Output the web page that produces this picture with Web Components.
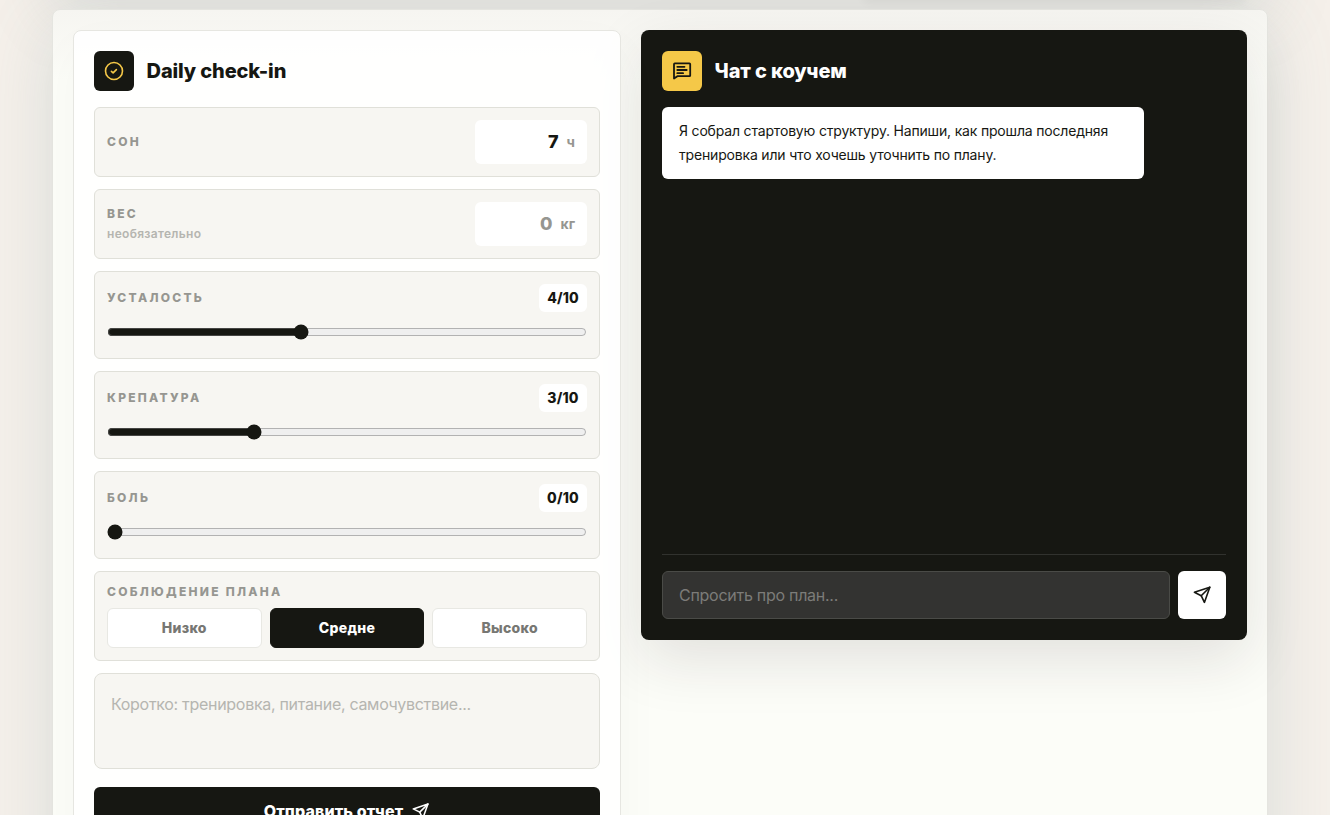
<!DOCTYPE html>
<html lang="ru">
<head>
<meta charset="utf-8">
<title>Daily check-in</title>
<style>
    html {
        height: 100%;
        overflow: hidden;
    }
    body {
        --ink: #161712;
        --line: #e0e0d9;
        --soft: #f7f6f2;
        --muted: #969691;
        --accent: #f5c848;
        height: 100%;
        margin: 0;
        overflow: hidden;
        background: #f5f0ea;
        color: var(--ink);
        font-family: Inter, "Noto Sans", sans-serif;
        font-size: 16px;
    }
</style>
</head>
<body>

<coach-page>
    <check-in-panel>
        <panel-title label="Daily check-in" icon="check"></panel-title>
        <number-row label="Сон" value="7" unit="ч"></number-row>
        <number-row label="Вес" hint="необязательно" value="0" unit="кг" empty></number-row>
        <scale-row label="Усталость" value="4"></scale-row>
        <scale-row label="Крепатура" value="3"></scale-row>
        <scale-row label="Боль" value="0"></scale-row>
        <choice-row label="Соблюдение плана" options="Низко,Средне,Высоко" selected="1"></choice-row>
        <note-field placeholder="Коротко: тренировка, питание, самочувствие..."></note-field>
        <submit-button>Отправить отчет</submit-button>
    </check-in-panel>
    <coach-chat>
        <panel-title label="Чат с коучем" icon="chat" slot="title"></panel-title>
        <chat-message>Я собрал стартовую структуру. Напиши, как прошла последняя тренировка или что хочешь уточнить по плану.</chat-message>
    </coach-chat>
</coach-page>

<script>
    const icons = {
        check: '<circle cx="10" cy="10" r="8.5"/><path d="M7.4 10.4l1.7 1.5 3.3-3.3"/>',
        chat: '<path d="M2 17.6V3.2c0-.5.3-.8.8-.8h14.6c.5 0 .8.3.8.8v11.2c0 .5-.3.8-.8.8H5.4z"/><path d="M5.3 5.8h7.2M5.3 9h9.4M5.3 12.2h5.8"/>',
        send: '<path d="M17.8 2.2L2.4 7.3l6.8 3.4 3.2 6.7z"/><path d="M9.2 10.7l8.6-8.5"/>'
    }

    function icon(name, size = 20, width = 1.6) {
        return `<svg width="${size}" height="${size}" viewBox="0 0 20 20" fill="none" stroke="currentColor" stroke-width="${width}" stroke-linecap="round" stroke-linejoin="round">${icons[name]}</svg>`
    }

    const base = `
        * { box-sizing: border-box; }
        svg { display: block; flex: none; }
        .label {
            font-size: 12px;
            line-height: 16px;
            font-weight: 800;
            letter-spacing: 0.19em;
            text-transform: uppercase;
            color: var(--muted);
        }
        .row {
            border: 1px solid var(--line);
            border-radius: 6px;
            background: var(--soft);
            padding: 12px;
        }
    `

    class BaseElement extends HTMLElement {
        constructor() {
            super()
            this.attachShadow({mode: 'open'})
        }
        connectedCallback() {
            this.shadowRoot.innerHTML = `<style>${base}</style>` + this.render()
        }
        attr(name) {
            return this.getAttribute(name) || ''
        }
    }

    customElements.define('coach-page', class extends BaseElement {
        render() {
            return `
            <style>
                :host { display: block; height: 100%; }
                .above {
                    height: 200px;
                    margin: -210px 62px 0 52px;
                    padding: 0 22px 0 810px;
                    box-shadow: 0 24px 60px rgba(100, 132, 138, 0.17);
                }
                .side {
                    height: 100%;
                    border-radius: 8px;
                    box-shadow: 0 14px 8px rgba(22, 23, 18, 0.035);
                }
                .shell {
                    width: 1216px;
                    height: 1000px;
                    margin: 19px 0 0 52px;
                    padding: 20px;
                    border: 1px solid #e5e5e0;
                    border-radius: 8px;
                    background: linear-gradient(#f6f5f1, #fcfdf8 70px);
                    box-shadow: 0 20px 70px rgba(110, 145, 155, 0.2);
                    display: grid;
                    grid-template-columns: 548px 606px;
                    gap: 20px;
                    align-items: start;
                }
            </style>
            <div class="above"><div class="side"></div></div>
            <main class="shell"><slot></slot></main>`
        }
    })

    customElements.define('check-in-panel', class extends BaseElement {
        render() {
            return `
            <style>
                :host {
                    box-sizing: border-box;
                    position: relative;
                    z-index: 1;
                    display: flex;
                    flex-direction: column;
                    gap: 12px;
                    padding: 20px;
                    border: 1px solid #e6e6e1;
                    border-radius: 8px;
                    background: rgba(255, 255, 255, 0.86);
                    box-shadow: 0 18px 50px rgba(40, 22, 30, 0.03);
                }
            </style>
            <slot></slot>`
        }
    })

    customElements.define('panel-title', class extends BaseElement {
        render() {
            const name = this.attr('icon')
            return `
            <style>
                :host { display: flex; align-items: center; gap: 12.6px; margin-bottom: 4px; }
                .badge {
                    width: 40px;
                    height: 40px;
                    border-radius: 6px;
                    display: grid;
                    place-items: center;
                }
                .check { background: var(--ink); color: var(--accent); }
                .chat { background: var(--accent); color: var(--ink); }
                h2 { margin: 0; font-size: 20px; line-height: 28px; font-weight: 800; letter-spacing: -0.13px; }
            </style>
            <div class="badge ${name}">${icon(name, 20, name === 'chat' ? 1.8 : 1.6)}</div>
            <h2>${this.attr('label')}</h2>`
        }
    })

    customElements.define('number-row', class extends BaseElement {
        render() {
            const hint = this.attr('hint')
            return `
            <style>
                :host { display: block; }
                .row { display: flex; align-items: center; justify-content: space-between; }
                .hint { margin-top: 4px; font-size: 12px; line-height: 16px; font-weight: 600; letter-spacing: 0.3px; color: #b5b5b0; }
                .value {
                    width: 112px;
                    height: 44px;
                    padding: 0 12px 1px;
                    border-radius: 6px;
                    background: #fff;
                    display: flex;
                    align-items: center;
                    justify-content: flex-end;
                    gap: 8px;
                    font-size: 18px;
                    line-height: 24px;
                    font-weight: 800;
                }
                .unit { font-size: 14px; font-weight: 700; color: var(--muted); }
                :host([empty]) .value { color: var(--muted); }
            </style>
            <div class="row">
                <div>
                    <div class="label">${this.attr('label')}</div>
                    ${hint ? `<div class="hint">${hint}</div>` : ''}
                </div>
                <div class="value"><span>${this.attr('value')}</span><span class="unit">${this.attr('unit')}</span></div>
            </div>`
        }
    })

    customElements.define('scale-row', class extends BaseElement {
        render() {
            const value = this.attr('value')
            return `
            <style>
                :host { display: block; }
                .row { height: 88px; }
                .head { display: flex; align-items: center; justify-content: space-between; }
                .score {
                    min-width: 48px;
                    padding: 4px 8px;
                    border-radius: 6px;
                    background: #fff;
                    font-size: 14px;
                    line-height: 20px;
                    font-weight: 800;
                    letter-spacing: 0.15px;
                    text-align: center;
                }
                input {
                    display: block;
                    width: 100%;
                    height: 16px;
                    margin: 12px 0 0;
                    accent-color: var(--ink);
                }
            </style>
            <div class="row">
                <div class="head">
                    <div class="label">${this.attr('label')}</div>
                    <div class="score">${value}/10</div>
                </div>
                <input type="range" min="0" max="10" value="${value}">
            </div>`
        }
    })

    customElements.define('choice-row', class extends BaseElement {
        render() {
            const selected = Number(this.attr('selected'))
            const buttons = this.attr('options').split(',').map((text, i) =>
                `<button class="${i === selected ? 'on' : ''}">${text}</button>`).join('')
            return `
            <style>
                :host { display: block; }
                .options {
                    display: grid;
                    grid-template-columns: repeat(3, 1fr);
                    gap: 8px;
                    margin-top: 8px;
                }
                button {
                    height: 40px;
                    padding: 0;
                    border: 1px solid #e8e8e3;
                    border-radius: 6px;
                    background: #fff;
                    color: #777773;
                    font: 800 14px/20px Inter, "Noto Sans", sans-serif;
                    letter-spacing: 0.3px;
                }
                .on { background: var(--ink); border-color: var(--ink); color: #fff; }
            </style>
            <div class="row">
                <div class="label">${this.attr('label')}</div>
                <div class="options">${buttons}</div>
            </div>`
        }
    })

    customElements.define('note-field', class extends BaseElement {
        render() {
            return `
            <style>
                :host { display: block; }
                textarea {
                    display: block;
                    width: 100%;
                    height: 96px;
                    padding: 18px 16px;
                    border: 1px solid var(--line);
                    border-radius: 8px;
                    background: var(--soft);
                    font: 400 16px/24px Inter, "Noto Sans", sans-serif;
                    letter-spacing: -0.3px;
                    resize: none;
                }
                textarea::placeholder { color: #b5b5b0; }
            </style>
            <textarea placeholder="${this.attr('placeholder')}"></textarea>`
        }
    })

    customElements.define('submit-button', class extends BaseElement {
        render() {
            return `
            <style>
                :host { display: block; margin-top: 6px; }
                button {
                    width: 100%;
                    height: 48px;
                    border: 0;
                    border-radius: 6px;
                    background: var(--ink);
                    color: #fff;
                    display: flex;
                    align-items: center;
                    justify-content: center;
                    gap: 8px;
                    font: 800 16px/24px Inter, "Noto Sans", sans-serif;
                    letter-spacing: 0.14px;
                }
            </style>
            <button><slot></slot>${icon('send', 19)}</button>`
        }
    })

    customElements.define('coach-chat', class extends BaseElement {
        render() {
            return `
            <style>
                :host {
                    box-sizing: border-box;
                    height: 610px;
                    padding: 21px;
                    border-radius: 8px;
                    background: var(--ink);
                    color: #fff;
                    box-shadow: 0 20px 60px rgba(40, 22, 30, 0.12);
                    display: flex;
                    flex-direction: column;
                }
                .messages { flex: 1; margin-top: 12px; }
                .composer {
                    display: flex;
                    gap: 8px;
                    padding-top: 16px;
                    border-top: 1px solid #31322e;
                }
                input {
                    flex: 1;
                    min-width: 0;
                    height: 48px;
                    padding: 0 16px;
                    border: 1px solid #4a4b47;
                    border-radius: 6px;
                    background: #333331;
                    color: #fff;
                    font: 400 16px/24px Inter, "Noto Sans", sans-serif;
                    letter-spacing: -0.27px;
                }
                input::placeholder { color: #7c7c79; }
                button {
                    width: 48px;
                    height: 48px;
                    padding: 0;
                    border: 0;
                    border-radius: 6px;
                    background: #fff;
                    color: var(--ink);
                    display: grid;
                    place-items: center;
                }
            </style>
            <slot name="title"></slot>
            <div class="messages"><slot></slot></div>
            <div class="composer">
                <input placeholder="Спросить про план...">
                <button>${icon('send')}</button>
            </div>`
        }
    })

    customElements.define('chat-message', class extends BaseElement {
        render() {
            return `
            <style>
                :host {
                    box-sizing: border-box;
                    display: block;
                    width: 482px;
                    padding: 12px 16px 12px 17px;
                    border-radius: 6px;
                    background: #fff;
                    color: var(--ink);
                    font-size: 14px;
                    line-height: 24px;
                    letter-spacing: -0.18px;
                }
            </style>
            <slot></slot>`
        }
    })
</script>
</body>
</html>
